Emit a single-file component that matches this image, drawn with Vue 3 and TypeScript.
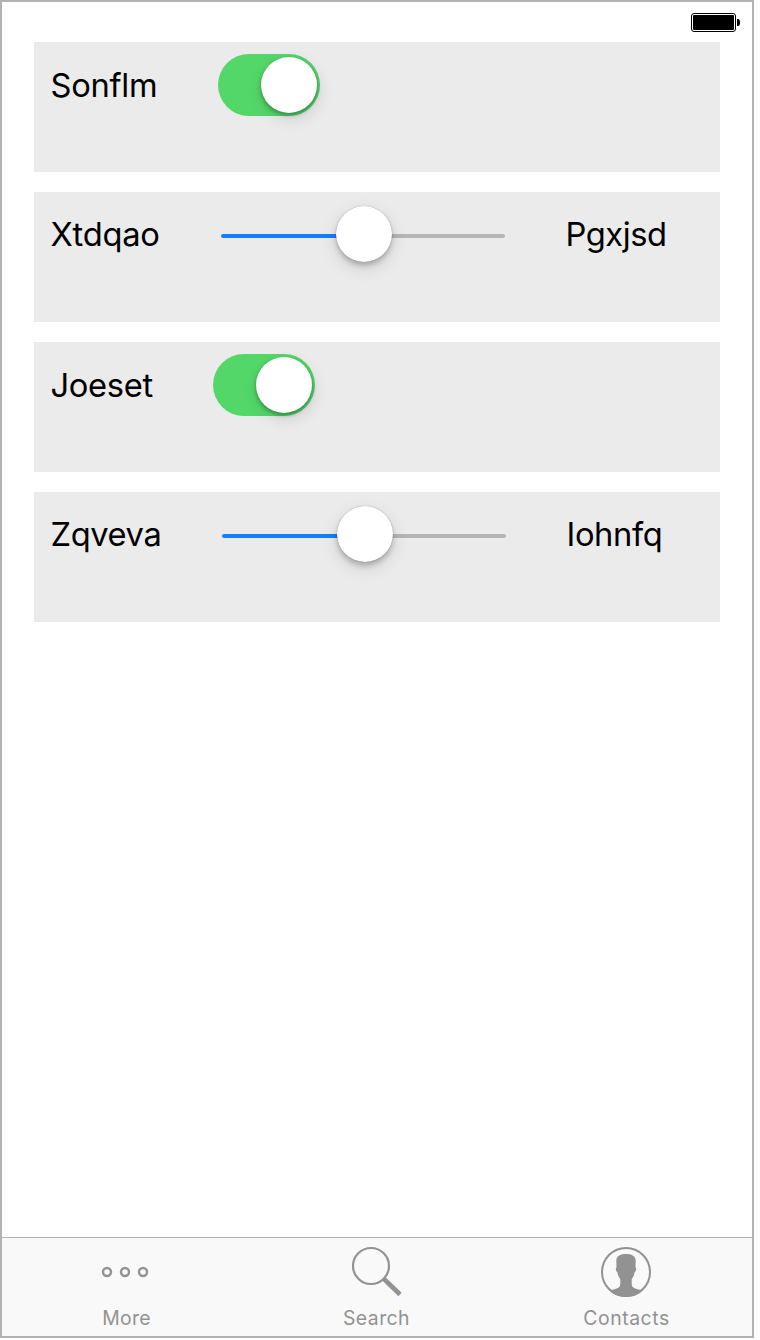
<script setup lang="ts">
type Row = {
  kind: 'switch' | 'slider'
  label: string
  labelWidth: number
  tracking: number
  value?: string
  valueTracking?: number
}

const rows: Row[] = [
  { kind: 'switch', label: 'Sonflm', labelWidth: 167.5, tracking: -0.3 },
  { kind: 'slider', label: 'Xtdqao', labelWidth: 170.5, tracking: -0.25, value: 'Pgxjsd', valueTracking: -0.45 },
  { kind: 'switch', label: 'Joeset', labelWidth: 162.5, tracking: -0.35 },
  { kind: 'slider', label: 'Zqveva', labelWidth: 171.5, tracking: -0.4, value: 'Iohnfq', valueTracking: -0.4 },
]
</script>

<template>
  <div class="screen">
    <header class="status">
      <svg class="battery" width="50" height="20" viewBox="0 0 50 20">
        <rect x="0.5" y="0.5" width="44" height="18" rx="2.5" fill="#fff" stroke="#000" />
        <rect x="2" y="2" width="41" height="15" rx="1" fill="#000" />
        <path d="M46 6h1a2 3.5 0 0 1 0 7h-1z" fill="#000" />
      </svg>
    </header>

    <main class="list">
      <section v-for="row in rows" :key="row.label" class="card" :class="row.kind + '-row'">
        <span class="label" :style="{ width: row.labelWidth + 'px', letterSpacing: row.tracking + 'px' }">{{ row.label }}</span>
        <div v-if="row.kind === 'switch'" class="switch"><i class="knob"></i></div>
        <template v-else>
          <div class="slider">
            <div class="track"></div>
            <i class="knob"></i>
          </div>
          <span class="value" :style="{ letterSpacing: row.valueTracking + 'px' }">{{ row.value }}</span>
        </template>
      </section>
    </main>

    <nav class="tabs">
      <div class="tab">
        <svg width="52" height="52" viewBox="0 0 52 52" fill="none" stroke="#929292" stroke-width="2.4">
          <circle cx="7" cy="26" r="4" />
          <circle cx="25" cy="26" r="4" />
          <circle cx="43" cy="26" r="4" />
        </svg>
        <span class="more">More</span>
      </div>
      <div class="tab">
        <svg width="52" height="52" viewBox="0 0 52 52" fill="none" stroke="#929292">
          <circle cx="21" cy="20" r="18" stroke-width="2.2" />
          <path d="M34 33L50 48.500" stroke-width="4.6" />
        </svg>
        <span class="search">Search</span>
      </div>
      <div class="tab">
        <svg width="52" height="52" viewBox="0 0 52 52">
          <circle cx="26" cy="26" r="24" fill="none" stroke="#929292" stroke-width="2" />
          <path d="M26 8c5 0 9.500 1.500 9.700 6.500l-.2 7c1.200.5.700 3.800-.8 4.500-.4 3-1.500 5.200-3 7v5c0 3 2 4.300 5 5l6 1.500C38 49 32 51 26 51S14 49 9.300 44.500l6-1.500c3-.7 5-2 5-5v-5c-1.500-1.800-2.600-4-3-7-1.500-.7-2-4-.8-4.500l-.2-7C16.500 9.500 21 8 26 8z" fill="#929292" />
        </svg>
        <span class="contacts">Contacts</span>
      </div>
    </nav>
  </div>
</template>

<style>
body {
  background: #fff;
}
</style>

<style scoped>
.screen {
  box-sizing: border-box;
  width: 754px;
  height: 1338px;
  border: 2px solid #b2b2b2;
  background: #fff;
  display: flex;
  flex-direction: column;
  font-family: Inter, "Liberation Sans", sans-serif;
  color: #000;
}
.status {
  height: 40px;
  box-sizing: border-box;
  padding: 11px 11px 0 0;
  display: flex;
  justify-content: flex-end;
}
.list {
  flex: 1;
  display: flex;
  flex-direction: column;
  gap: 20px;
  padding: 0 32px;
}
.card {
  box-sizing: border-box;
  height: 130px;
  padding: 12px 0 0 16.5px;
  background: #ebebeb;
  display: flex;
  align-items: flex-start;
}
.label,
.value {
  flex: none;
  font-size: 32.7px;
  line-height: 62px;
  white-space: nowrap;
}
.slider-row .label,
.slider-row .value {
  line-height: 60px;
}
.knob {
  display: block;
  width: 56px;
  height: 56px;
  border-radius: 50%;
  background: #fff;
}
.switch {
  box-sizing: border-box;
  width: 102px;
  height: 62px;
  padding: 3px 3px 3px 43px;
  border-radius: 31px;
  background: #53d769;
}
.switch .knob {
  box-shadow: 0 2px 4px rgba(0, 0, 0, 0.32), 2px 6px 16px rgba(0, 0, 0, 0.12);
}
.slider {
  width: 284px;
  height: 60px;
  display: grid;
  align-items: center;
  justify-items: center;
}
.slider > * {
  grid-area: 1 / 1;
}
.track {
  width: 100%;
  height: 4px;
  margin-top: 4px;
  border-radius: 2px;
  background: linear-gradient(90deg, #147efb 50%, #b5b5b5 50%);
}
.slider .knob {
  margin-left: 2px;
  box-shadow: 0 0 1px rgba(0, 0, 0, 0.4), 0 4px 5px rgba(0, 0, 0, 0.2), 0 6px 18px rgba(0, 0, 0, 0.12);
}
.value {
  margin-left: 60.5px;
}
.tabs {
  flex: none;
  box-sizing: border-box;
  height: 99px;
  border-top: 1px solid #b2b2b2;
  background: #f9f9f9;
  display: grid;
  grid-template-columns: repeat(3, 250px);
}
.tab {
  display: flex;
  flex-direction: column;
  align-items: center;
  padding-top: 8px;
  color: #929292;
  font-size: 19.4px;
  line-height: 24px;
}
.tab svg {
  flex: none;
  margin-right: 2px;
}
.tab span {
  margin-top: 8px;
  margin-right: 1px;
}
.more {
  letter-spacing: 0.3px;
}
.search {
  letter-spacing: 0.45px;
}
.contacts {
  letter-spacing: 0.55px;
}
</style>
